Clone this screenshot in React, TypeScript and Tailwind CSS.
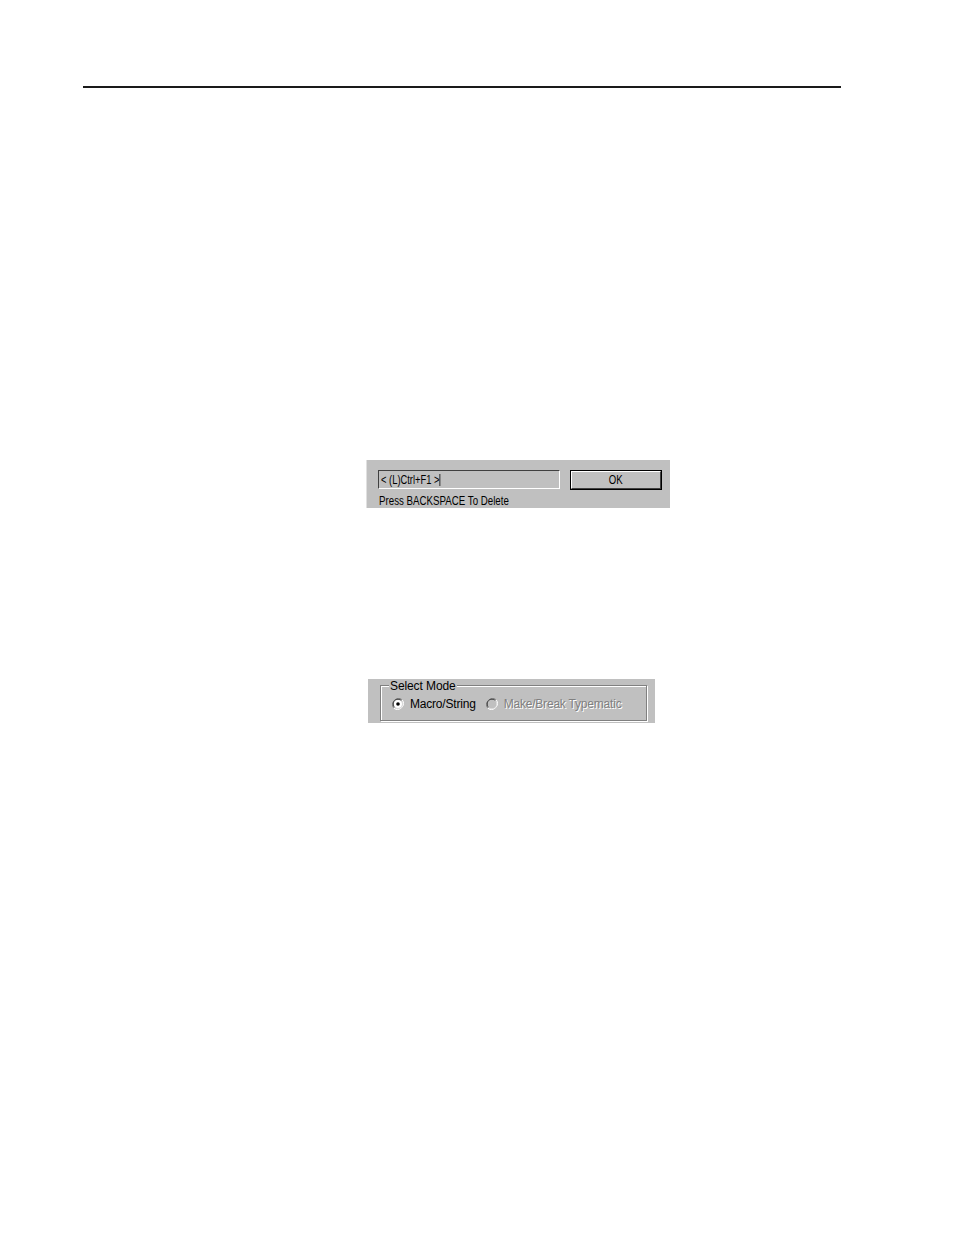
import React from "react";

const font = { fontFamily: '"Liberation Sans", Arial, sans-serif' };

function Radio({ checked, disabled }: { checked?: boolean; disabled?: boolean }) {
  return (
    <svg width="12" height="12" viewBox="0 0 12 12" className="shrink-0">
      {/* sunken ring */}
      <path d="M10.2 1.8 A6 6 0 0 0 1.8 10.2" fill="none" stroke="#808080" strokeWidth="1" />
      <path d="M1.8 10.2 A6 6 0 0 0 10.2 1.8" fill="none" stroke="#ffffff" strokeWidth="1" />
      <path d="M9.4 2.6 A4.8 4.8 0 0 0 2.6 9.4" fill="none" stroke="#404040" strokeWidth="1" />
      <path d="M2.6 9.4 A4.8 4.8 0 0 0 9.4 2.6" fill="none" stroke="#dfdfdf" strokeWidth="1" />
      <circle cx="6" cy="6" r="4" fill={disabled ? "#c0c0c0" : "#ffffff"} />
      {checked && <circle cx="6" cy="6" r="1.8" fill="#000000" />}
    </svg>
  );
}

export default function App() {
  return (
    <div className="w-[954px] h-[1235px] bg-white flex flex-col overflow-hidden" style={font}>
      {/* page rule */}
      <div className="mt-[86px] ml-[83px] w-[758px] h-[2px] bg-[#1a1a1a]" />

      {/* key entry panel */}
      <div className="mt-[372px] ml-[366px] w-[304px] h-[48px] bg-[#c0c0c0] border-l border-[#e0e0e0] pl-[11px] pt-[10px] flex flex-col">
        <div className="flex items-start">
          <div className="w-[182px] h-[19px] bg-[#c0c0c0] border-t border-l border-[#404040] border-b border-r border-b-white border-r-white flex items-center pl-[2px] text-[12px] leading-none text-black">
            <span className="inline-flex items-center whitespace-pre origin-left scale-x-[0.78]">
              &lt; (L)Ctrl+F1 &gt;<span className="inline-block w-[1.3px] h-[12px] bg-black" />
            </span>
          </div>
          <div className="ml-[10px] w-[92px] h-[20px] border border-black">
            <div className="w-full h-full border-t border-l border-white border-b border-r border-b-[#404040] border-r-[#404040] bg-[#c0c0c0] flex items-center justify-center text-[12px] leading-none text-black">
              <span className="inline-block scale-x-[0.8]">OK</span>
            </div>
          </div>
        </div>
        <div className="mt-[5px] ml-[1px] text-[12px] leading-none text-black">
          <span className="inline-block whitespace-pre origin-left scale-x-[0.81]">Press BACKSPACE To Delete</span>
        </div>
      </div>

      {/* mode panel */}
      <div className="mt-[171px] ml-[368px] w-[287px] h-[44px] bg-[#c0c0c0] pl-[12px] pt-[6px]">
        <div className="relative w-[267px] h-[36px] border border-[#808080] shadow-[inset_1px_1px_0_#ffffff,1px_1px_0_#ffffff]">
          <span className="absolute -top-[6px] left-[8px] px-[1px] bg-[#c0c0c0] text-[12px] leading-[12px] text-black tracking-[-0.1px]">
            Select Mode
          </span>
          <div className="flex items-center pt-[12px] pl-[11px] text-[12px] leading-none tracking-[-0.2px]">
            <Radio checked />
            <span className="ml-[6px] text-black">Macro/String</span>
            <span className="ml-[10px]">
              <Radio disabled />
            </span>
            <span className="ml-[6px] text-[#808080] [text-shadow:1px_1px_0_#ffffff]">
              Make/Break Typematic
            </span>
          </div>
        </div>
      </div>
    </div>
  );
}
